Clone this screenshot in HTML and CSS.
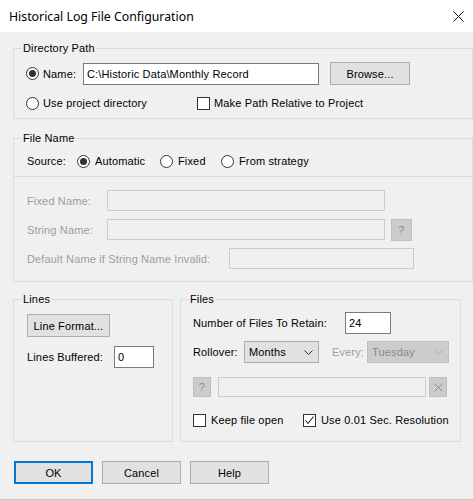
FILE: index.html
```html
<!DOCTYPE html>
<html>
<head>
<meta charset="utf-8">
<title>Historical Log File Configuration</title>
<link rel="stylesheet" href="styles.css">
</head>
<body>
<div class="window">
  <div class="titlebar">
    <span class="title">Historical Log File Configuration</span>
    <svg class="close" viewBox="0 0 11 11" width="11" height="11"><path d="M0.5 0.5 L10.5 10.5 M10.5 0.5 L0.5 10.5" stroke="#111" stroke-width="1" fill="none"/></svg>
  </div>
  <div class="body">
    <fieldset class="group dir">
      <legend>Directory Path</legend>
      <div class="row r-name">
        <label class="opt w-name"><span class="radio on"></span>Name:</label>
        <div class="edit name-edit">C:\Historic Data\Monthly Record</div>
        <button class="btn browse">Browse...</button>
      </div>
      <div class="row r-proj">
        <label class="opt w-proj"><span class="radio"></span>Use project directory</label>
        <label class="opt"><span class="check"></span>Make Path Relative to Project</label>
      </div>
    </fieldset>

    <fieldset class="group fname">
      <legend>File Name</legend>
      <div class="row r-source">
        <span class="lbl w-source">Source:</span>
        <label class="opt w-auto"><span class="radio on"></span>Automatic</label>
        <label class="opt w-fixed"><span class="radio"></span>Fixed</label>
        <label class="opt"><span class="radio"></span>From strategy</label>
      </div>
      <div class="sep"></div>
      <div class="fields">
        <div class="row r-field">
          <span class="lbl dis w-fn">Fixed Name:</span>
          <div class="edit dis-edit w-fnedit"></div>
        </div>
        <div class="row r-field">
          <span class="lbl dis w-fn">String Name:</span>
          <div class="edit dis-edit w-fnedit"></div>
          <button class="btn dis-btn qbtn">?</button>
        </div>
        <div class="row r-field">
          <span class="lbl dis w-def">Default Name if String Name Invalid:</span>
          <div class="edit dis-edit w-defedit"></div>
        </div>
      </div>
    </fieldset>

    <div class="pair">
      <fieldset class="group lines">
        <legend>Lines</legend>
        <button class="btn linefmt">Line Format...</button>
        <div class="row r-buf">
          <span class="lbl w-buf">Lines Buffered:</span>
          <div class="edit buf-edit">0</div>
        </div>
      </fieldset>
      <fieldset class="group files">
        <legend>Files</legend>
        <div class="row r-retain">
          <span class="lbl w-retain">Number of Files To Retain:</span>
          <div class="edit retain-edit">24</div>
        </div>
        <div class="row r-roll">
          <span class="lbl w-roll">Rollover:</span>
          <div class="combo months"><span>Months</span><svg viewBox="0 0 9 5" width="9" height="5"><path d="M0.5 0.5 L4.5 4.5 L8.5 0.5" stroke="#333" fill="none"/></svg></div>
          <span class="lbl dis w-every">Every:</span>
          <div class="combo dis-combo tues"><span>Tuesday</span><svg viewBox="0 0 9 5" width="9" height="5"><path d="M0.5 0.5 L4.5 4.5 L8.5 0.5" stroke="#a8a8a8" fill="none"/></svg></div>
        </div>
        <div class="row r-strat">
          <button class="btn dis-btn sbtn">?</button>
          <div class="edit dis-edit strat-edit"></div>
          <button class="btn dis-btn xbtn"><svg viewBox="0 0 9 9" width="9" height="9"><path d="M0.5 0.5 L8.5 8.5 M8.5 0.5 L0.5 8.5" stroke="#8a8a8a" fill="none"/></svg></button>
        </div>
        <div class="row r-checks">
          <label class="opt w-keep"><span class="check"></span>Keep file open</label>
          <label class="opt"><span class="check"><svg viewBox="0 0 11 11" width="11" height="11"><path d="M1.5 5.5 L4 8.5 L9.5 1.5" stroke="#222" stroke-width="1.1" fill="none"/></svg></span>Use 0.01 Sec. Resolution</label>
        </div>
      </fieldset>
    </div>

    <div class="buttons">
      <button class="btn dlg ok">OK</button>
      <button class="btn dlg">Cancel</button>
      <button class="btn dlg">Help</button>
    </div>
  </div>
</div>
</body>
</html>
```

FILE: styles.css
```css
* { box-sizing: border-box; }
html, body { margin: 0; padding: 0; background: #f0f0f0; }
body {
  font-family: "Liberation Sans", Arial, sans-serif;
  font-size: 11px;
  letter-spacing: 0.15px;
  color: #000;
}
.window {
  width: 474px;
  height: 500px;
  background: #f0f0f0;
  border-right: 1px solid #d4d4d4;
  border-bottom: 1px solid #c4c4c4;
  display: flex;
  flex-direction: column;
}
.titlebar {
  height: 32px;
  flex: none;
  background: #fff;
  display: flex;
  align-items: center;
  justify-content: space-between;
  padding: 0 9px 0 9px;
}
.title {
  font-family: "Noto Sans", "Open Sans", sans-serif;
  font-size: 12.3px;
  letter-spacing: 0;
  color: #000;
}
.close { display: block; }
.body { padding: 10px 0 0 13px; }

.group {
  margin: 0;
  padding: 0;
  border: 1px solid #dcdcdc;
  min-width: 0;
}
legend {
  padding: 0 1px;
  margin-left: 8px;
  line-height: 13px;
  font-size: 11px;
}
.dir > legend, .files > legend { margin-left: -4px; }
.lines > legend { margin-left: -5px; }
.row { display: flex; align-items: center; }
.lbl { flex: none; white-space: nowrap; }
.dis { color: #9d9d9d; }
.opt {
  display: flex;
  align-items: center;
  gap: 4px;
  height: 16px;
  flex: none;
  white-space: nowrap;
}
.radio {
  width: 13px;
  height: 13px;
  border: 1px solid #333;
  border-radius: 50%;
  background: #fff;
  flex: none;
  display: flex;
  align-items: center;
  justify-content: center;
}
.radio.on::after {
  content: "";
  width: 7px;
  height: 7px;
  border-radius: 50%;
  background: #333;
}
.check {
  width: 13px;
  height: 13px;
  border: 1px solid #333;
  background: #fff;
  flex: none;
  display: flex;
  align-items: center;
  justify-content: center;
}
.check svg { display: block; }
.edit {
  height: 22px;
  border: 1px solid #7a7a7a;
  background: #fff;
  padding: 0 3px;
  display: flex;
  align-items: center;
  flex: none;
  white-space: nowrap;
}
.dis-edit {
  height: 21px;
  border-color: #cccccc;
  background: #f0f0f0;
}
.btn {
  font: inherit;
  letter-spacing: inherit;
  color: #000;
  height: 23px;
  background: #e1e1e1;
  border: 1px solid #adadad;
  padding: 0;
  margin: 0;
  display: flex;
  align-items: center;
  justify-content: center;
  flex: none;
}
.dis-btn {
  background: #cccccc;
  border-color: #bfbfbf;
  color: #8a8a8a;
}

/* Directory Path */
.dir { padding: 7px 0 7px 12px; }
.r-name { height: 23px; }
.w-name { width: 57px; }
.name-edit { width: 236px; }
.browse { width: 80px; margin-left: 11px; }
.r-proj { margin-top: 10px; }
.w-proj { width: 171px; }

/* File Name */
.fname { margin-top: 13px; padding: 8px 0 12px 0; }
.r-source { padding-left: 13px; height: 16px; }
.w-source { width: 50px; }
.w-auto { width: 83px; }
.w-fixed { width: 61px; }
.r-source .opt { gap: 5px; }
.sep { height: 1px; background: #dcdcdc; margin-top: 7px; }
.fields {
  padding-left: 13px;
  margin-top: 13px;
  display: flex;
  flex-direction: column;
  gap: 8px;
}
.r-field { height: 21px; }
.w-fn { width: 80px; }
.w-fnedit { width: 278px; }
.qbtn { width: 21px; height: 22px; margin-left: 6px; }
.w-def { width: 202px; }
.w-defedit { width: 185px; }

/* Lines / Files */
.pair { display: flex; margin-top: 11px; align-items: stretch; }
.lines { width: 160px; padding: 8px 0 0 13px; }
.linefmt { width: 83px; }
.r-buf { margin-top: 9px; }
.w-buf { width: 87px; }
.buf-edit { width: 40px; }
.files { width: 281px; margin-left: 7px; padding: 6px 0 13px 12px; }
.w-retain { width: 152px; }
.retain-edit { width: 46px; }
.r-roll { margin-top: 7px; }
.w-roll { width: 51px; }
.combo {
  height: 22px;
  border: 1px solid #adadad;
  background: #e1e1e1;
  display: flex;
  align-items: center;
  justify-content: space-between;
  padding: 0 5px 0 4px;
  flex: none;
}
.combo svg { display: block; }
.months { width: 75px; }
.w-every { width: 35px; margin-left: 13px; }
.dis-combo {
  background: #cccccc;
  border-color: #bfbfbf;
  color: #8a8a8a;
}
.tues { width: 82px; }
.r-strat { margin-top: 14px; }
.sbtn { width: 18px; height: 20px; }
.strat-edit { width: 208px; height: 20px; margin-left: 7px; }
.xbtn { width: 18px; height: 20px; margin-left: 3px; }
.r-checks { margin-top: 15px; }
.w-keep { width: 110px; }
.r-checks .opt { gap: 5px; }

/* Dialog buttons */
.buttons {
  display: flex;
  gap: 9px;
  margin-top: 19px;
  padding-left: 1px;
}
.dlg { width: 79px; }
.ok {
  border-color: #0078d7;
  box-shadow: inset 0 0 0 1px #0078d7;
}
```
